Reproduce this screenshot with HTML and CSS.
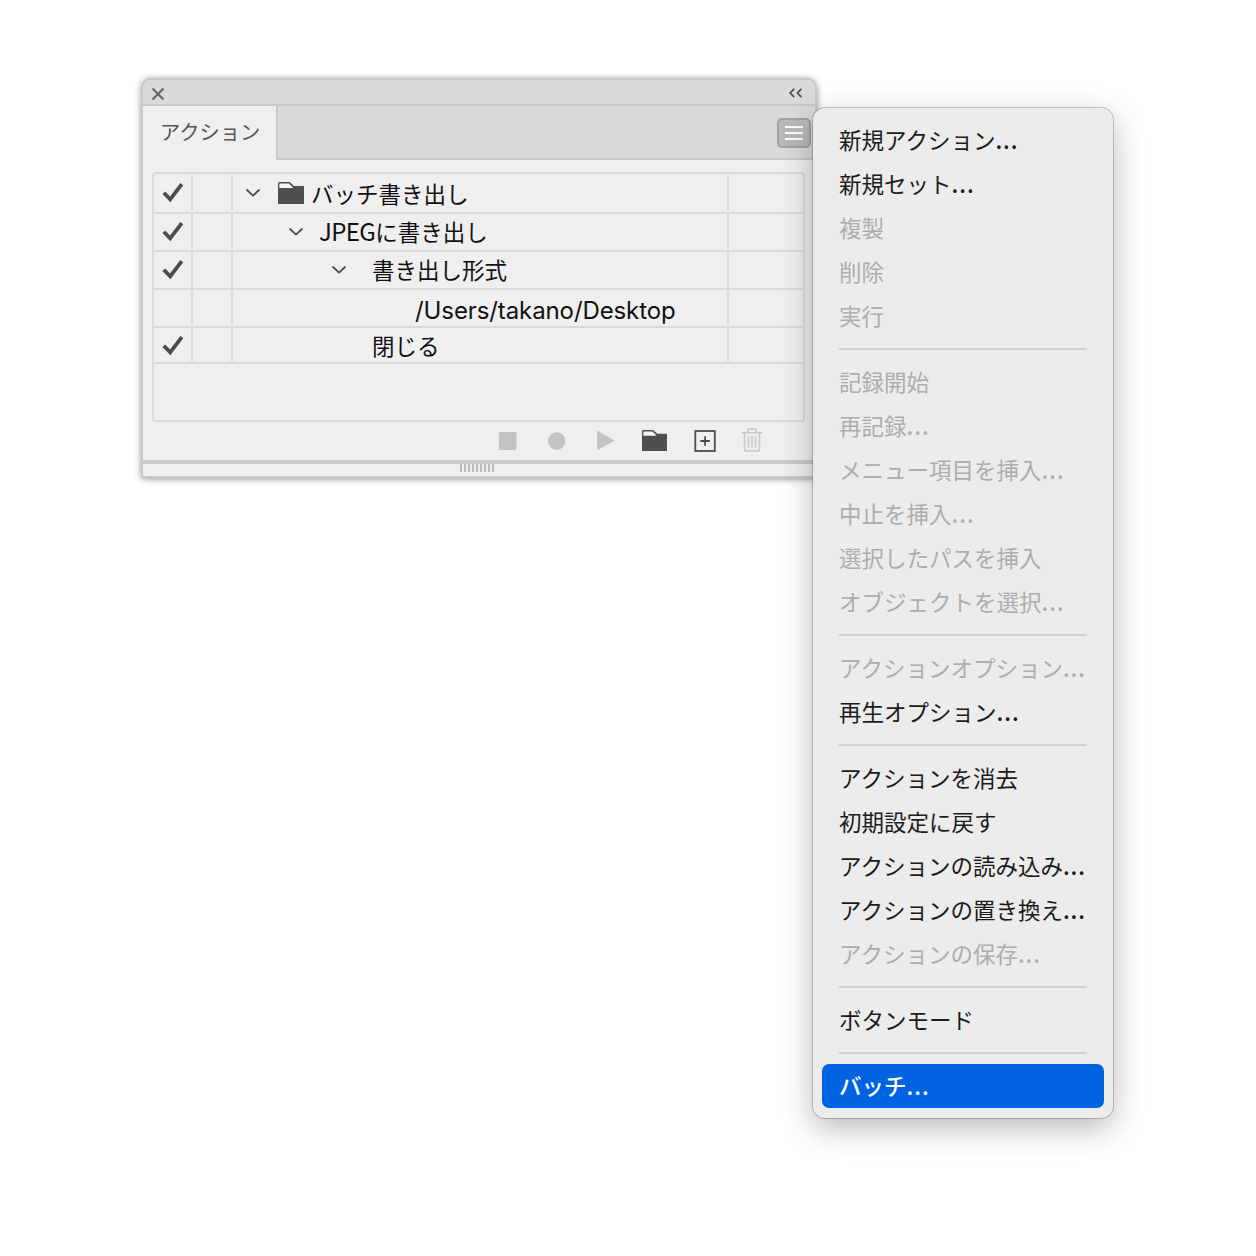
FILE: index.html
```html
<!DOCTYPE html>
<html lang="ja">
<head>
  <meta charset="UTF-8">
  <title>アクション</title>
  <link rel="stylesheet" href="styles.css">
</head>
<body>
  <!-- アイコン定義 -->
  <svg class="defs">
    <symbol id="check" viewBox="0 0 22 20"><path d="M1.8 9.7 8.2 16.3 19.8 1.2" fill="none" stroke="#4c4c4c" stroke-width="3.8"/></symbol>
    <symbol id="arrow" viewBox="0 0 14 8"><path d="M1 1l6 5.6L13 1" fill="none" stroke="#4c4c4c" stroke-width="1.8" stroke-linecap="round"/></symbol>
    <symbol id="folder" viewBox="0 0 26 22"><path d="M0 22V1.5Q0 0 1.5 0H11.5l4.5 4H26V22z" fill="#4f4f50"/><path d="M1.4 6V1.6H10.8L14.8 5.2Q15 6 14 6z" fill="#f4f4f4"/></symbol>
  </svg>

  <!-- アクションパネル -->
  <div class="panel">
    <div class="titlebar">
      <svg class="close" width="12" height="12" viewBox="0 0 12 12"><path d="M.5 .5l11 11M11.5 .5L.5 11.5" stroke="#666" stroke-width="2.2"/></svg>
      <svg class="collapse" width="14" height="10" viewBox="0 0 14 10"><path d="M5.2.8L1.2 5l4 4.2M12.4.8l-4 4.2 4 4.2" fill="none" stroke="#4a4a4a" stroke-width="1.7"/></svg>
    </div>
    <div class="tabs">
      <div class="tab">アクション</div>
      <div class="tab-space">
        <div class="menu-button"><i></i><i></i><i></i></div>
      </div>
    </div>

    <div class="list">
      <div class="row">
        <div class="cell"><svg class="check"><use href="#check"/></svg></div>
        <div class="cell"></div>
        <div class="cell name"><svg class="arrow"><use href="#arrow"/></svg><svg class="folder"><use href="#folder"/></svg><span>バッチ書き出し</span></div>
        <div class="cell"></div>
      </div>
      <div class="row">
        <div class="cell"><svg class="check"><use href="#check"/></svg></div>
        <div class="cell"></div>
        <div class="cell name level2"><svg class="arrow"><use href="#arrow"/></svg><span><b>JPEG</b>に書き出し</span></div>
        <div class="cell"></div>
      </div>
      <div class="row">
        <div class="cell"><svg class="check"><use href="#check"/></svg></div>
        <div class="cell"></div>
        <div class="cell name level3"><svg class="arrow"><use href="#arrow"/></svg><span>書き出し形式</span></div>
        <div class="cell"></div>
      </div>
      <div class="row">
        <div class="cell"></div>
        <div class="cell"></div>
        <div class="cell name level4"><span class="path">/Users/takano/Desktop</span></div>
        <div class="cell"></div>
      </div>
      <div class="row last">
        <div class="cell"><svg class="check"><use href="#check"/></svg></div>
        <div class="cell"></div>
        <div class="cell name level3 leaf"><span>閉じる</span></div>
        <div class="cell"></div>
      </div>
    </div>

    <div class="toolbar">
      <svg width="18" height="18"><rect width="17.5" height="18" rx="1" fill="#c3c3c3"/></svg>
      <svg width="18" height="18"><circle cx="8.7" cy="9" r="8.7" fill="#c3c3c3"/></svg>
      <svg width="18" height="19"><path d="M0 0.8L1 0 17.5 9.5 1 19 0 18z" fill="#c3c3c3"/></svg>
      <svg width="25" height="21" viewBox="0 0 26 22" preserveAspectRatio="none"><use href="#folder" width="26" height="22"/></svg>
      <svg width="22" height="22" fill="none" stroke="#4c4c4c"><rect x="1.3" y="1" width="19.5" height="20" stroke-width="1.8"/><path d="M6.3 11h9.6M11.1 6.2v9.6" stroke-width="1.8"/></svg>
      <svg class="trash" width="20" height="24" fill="none" stroke="#c6c6c6" stroke-width="1.6"><path d="M0 4.8H20M6 4.5V3Q6 1 8 1H12Q14 1 14 3V4.5M2.5 5V21.5Q2.5 23 4 23H16Q17.5 23 17.5 21.5V5M6.5 8V19.5M10 8V19.5M13.5 8V19.5"/></svg>
    </div>
    <div class="resize"><div class="grip"></div></div>
  </div>

  <!-- パネルメニュー -->
  <div class="menu">
    <div class="item">新規アクション<span class="dots">...</span></div>
    <div class="item">新規セット<span class="dots">...</span></div>
    <div class="item disabled">複製</div>
    <div class="item disabled">削除</div>
    <div class="item disabled">実行</div>
    <div class="separator"></div>
    <div class="item disabled">記録開始</div>
    <div class="item disabled">再記録<span class="dots">...</span></div>
    <div class="item disabled">メニュー項目を挿入<span class="dots">...</span></div>
    <div class="item disabled">中止を挿入<span class="dots">...</span></div>
    <div class="item disabled">選択したパスを挿入</div>
    <div class="item disabled">オブジェクトを選択<span class="dots">...</span></div>
    <div class="separator"></div>
    <div class="item disabled">アクションオプション<span class="dots">...</span></div>
    <div class="item">再生オプション<span class="dots">...</span></div>
    <div class="separator"></div>
    <div class="item">アクションを消去</div>
    <div class="item">初期設定に戻す</div>
    <div class="item">アクションの読み込み<span class="dots">...</span></div>
    <div class="item">アクションの置き換え<span class="dots">...</span></div>
    <div class="item disabled">アクションの保存<span class="dots">...</span></div>
    <div class="separator"></div>
    <div class="item">ボタンモード</div>
    <div class="separator"></div>
    <div class="item selected">バッチ<span class="dots">...</span></div>
  </div>
</body>
</html>
```
FILE: styles.css
```css
* {
  box-sizing: border-box;
}
body {
  margin: 0;
  height: 1256px;
  overflow: hidden;
  position: relative;
  background-color: #fff;
  font-family: "Noto Sans CJK JP", sans-serif;
  font-size: 22.5px;
}
svg {
  display: block;
  flex: none;
}
.defs {
  position: absolute;
  width: 0;
  height: 0;
}

/* パネル */
.panel {
  position: absolute;
  left: 141px;
  top: 78px;
  width: 676px;
  height: 400px;
  display: flex;
  flex-direction: column;
  border: 2px solid #c9c9c9;
  border-radius: 10px 10px 3px 3px;
  background-color: #efefef;
  box-shadow: 0 1px 7px rgba(0, 0, 0, 0.42);
}
.titlebar {
  height: 26px;
  flex: none;
  display: flex;
  align-items: center;
  justify-content: space-between;
  padding: 1px 12px 0 9px;
  border-bottom: 2px solid #c9c9c9;
  border-radius: 8px 8px 0 0;
  background-color: #dadada;
}
.close {
  margin-top: 3px;
}
.tabs {
  height: 54px;
  flex: none;
  display: flex;
}
.tab {
  width: 133px;
  padding-left: 17px;
  line-height: 50px;
  font-size: 20.3px;
  color: #555;
}
.tab-space {
  flex: 1;
  display: flex;
  justify-content: flex-end;
  padding: 12px 4px 0 0;
  border-left: 2px solid #c9c9c9;
  border-bottom: 2px solid #c9c9c9;
  background-color: #dadada;
}
.menu-button {
  width: 34px;
  height: 30px;
  padding: 6px;
  display: flex;
  flex-direction: column;
  gap: 4px;
  border: 2px solid #a2a2a2;
  border-radius: 5px;
  background-color: #b9b9b9;
}
.menu-button i {
  height: 2px;
  background-color: #fff;
}

/* アクションの一覧 */
.list {
  height: 250px;
  flex: none;
  margin: 12px 10px 0 9px;
  border: 2px solid #dadada;
  border-radius: 4px;
}
.row {
  height: 38px;
  display: grid;
  grid-template-columns: 39px 40px 496px 1fr;
  margin-right: 1px;
  border-bottom: 2px solid #dadada;
  color: #111;
}
.row:first-child {
  height: 40px;
  padding-top: 1px;
}
.row.last {
  height: 36px;
}
.cell {
  display: flex;
  align-items: center;
  border-right: 2px solid #dcdcdc;
  margin-bottom: 1px;
}
.row.last .cell {
  margin-bottom: 0;
}
.cell:last-child {
  border-right: none;
}
.name {
  padding-left: 13px;
  line-height: 35px;
  white-space: nowrap;
}
.name b {
  font-size: 24px;
  font-weight: normal;
  line-height: 1;
  letter-spacing: -0.6px;
}
.level2 {
  padding-left: 56px;
}
.level3 {
  padding-left: 99px;
}
.level4 {
  padding-left: 182px;
}
.leaf {
  padding-left: 139px;
}
.check {
  width: 22px;
  height: 20px;
  margin-left: 8px;
}
.arrow {
  width: 14px;
  height: 8px;
  margin-right: 17px;
}
.level2 .arrow {
  margin-right: 16px;
}
.level3 .arrow {
  margin-right: 26px;
}
.folder {
  width: 26px;
  height: 22px;
  margin: 0 7px 0 1px;
}
.path {
  font-family: Inter, sans-serif;
  font-size: 24px;
  letter-spacing: -0.1px;
  padding-top: 3px;
}

/* 下部のボタン */
.toolbar {
  flex: 1;
  display: grid;
  grid-template-columns: 49px 49px 45px 52px 48px 20px;
  align-items: center;
  padding: 0 0 1px 356px;
}
.trash {
  margin-top: -1px;
}
.resize {
  height: 16px;
  flex: none;
  border-top: 4px solid #cbcbcb;
}
.grip {
  width: 36px;
  height: 8px;
  margin-left: 317px;
  background: repeating-linear-gradient(to right, #bbb 0 2px, #efefef 2px 4px);
}

/* メニュー */
.menu {
  position: absolute;
  left: 813px;
  top: 108px;
  width: 300px;
  height: 1010px;
  padding: 10px 9px;
  border-radius: 12px;
  background-color: #ececec;
  box-shadow: 0 0 0 1px rgba(0, 0, 0, 0.2), 0 10px 32px rgba(0, 0, 0, 0.28);
}
.item {
  height: 44px;
  padding-left: 17px;
  line-height: 42px;
  border-radius: 7px;
  color: #1c1c1c;
  white-space: nowrap;
}
.item.disabled {
  color: #adadad;
}
.item.selected {
  background-color: #0063e1;
  color: #fff;
  font-weight: 500;
}
.dots {
  font-weight: 500;
  letter-spacing: 1px;
}
.separator {
  height: 22px;
  margin: 0 17px;
  padding-top: 10px;
}
.separator::before {
  content: "";
  display: block;
  height: 2px;
  background-color: #d0d0d0;
}
```
